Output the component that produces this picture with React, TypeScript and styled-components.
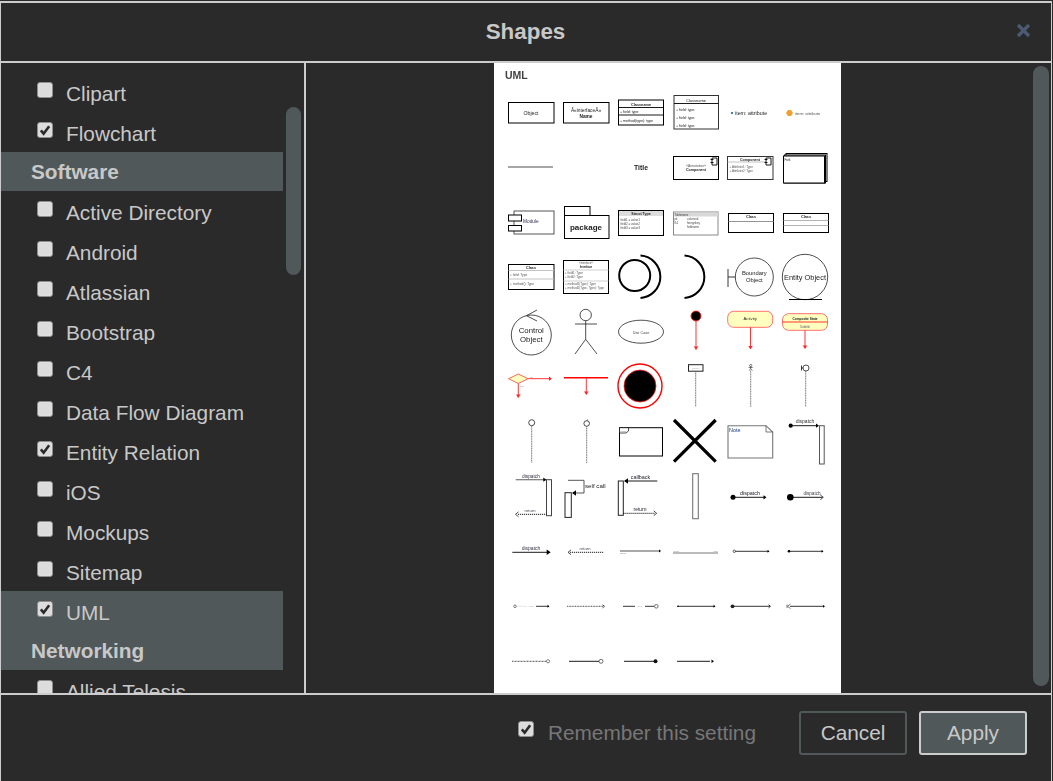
import React from 'react';
import styled, { createGlobalStyle } from 'styled-components';

const GlobalStyle = createGlobalStyle`
  html, body {
    margin: 0;
    padding: 0;
    background: #2a2a2a;
    overflow: hidden;
  }
`;

const Dialog = styled.div`
  box-sizing: border-box;
  width: 1052px;
  height: 780px;
  margin-top: 1px;
  background: #2a2a2a;
  border: 1px solid #cccccc;
  border-top-width: 2px;
  border-bottom: none;
  font-family: 'Liberation Sans', Arial, sans-serif;
  display: flex;
  flex-direction: column;
`;

const Header = styled.div`
  position: relative;
  height: 58px;
  flex: none;
  display: flex;
  align-items: center;
  justify-content: center;
  border-bottom: 2px solid #cccccc;
`;

const Title = styled.div`
  font-size: 22.4px;
  font-weight: 700;
  color: #c8c8c8;
  margin-left: -1px;
`;

const CloseButton = styled.div`
  position: absolute;
  right: 20px;
  top: 20px;
  width: 15px;
  height: 15px;
  color: #4c5a73;
  display: flex;
`;

const Body = styled.div`
  flex: none;
  height: 630px;
  display: flex;
  border-bottom: 2px solid #cccccc;
`;

const Sidebar = styled.div`
  flex: none;
  width: 303px;
  display: flex;
  overflow: hidden;
  border-right: 2px solid #cccccc;
`;

const List = styled.div`
  flex: none;
  width: 282px;
  padding-top: 9px;
`;

const Row = styled.div<{ $active?: boolean }>`
  height: 40px;
  display: flex;
  align-items: center;
  padding-left: 36px;
  background: ${(props) => (props.$active ? '#505859' : 'transparent')};
  color: #c8c8c8;
  font-size: 20.8px;
`;

const RowLabel = styled.span`
  margin-left: 13px;
  position: relative;
  top: 2px;
  white-space: nowrap;
`;

const GroupTitle = styled.div`
  height: 39px;
  line-height: 39px;
  padding-left: 30px;
  background: #505859;
  color: #c8c8c8;
  font-size: 20.8px;
  font-weight: 700;
`;

const CheckBox = styled.span`
  box-sizing: border-box;
  flex: none;
  width: 16px;
  height: 16px;
  margin-top: -4px;
  border: 1px solid #8e8e8e;
  border-radius: 3px;
  background: #dcdcdc;
  box-shadow: inset 0 0 1px #ffffff;
  display: flex;
  align-items: center;
  justify-content: center;
`;

const ListThumb = styled.div`
  flex: none;
  width: 15px;
  height: 168px;
  margin: 44px 0 0 3px;
  border-radius: 8px;
  background: #505859;
`;

const PreviewPane = styled.div`
  flex: 1;
  display: flex;
  padding-left: 188px;
  min-width: 0;
`;

const PreviewImage = styled.svg`
  flex: none;
  width: 347px;
  height: 630px;
  background: #ffffff;
  filter: blur(0.4px);
`;

const PreviewThumb = styled.div`
  flex: none;
  width: 16px;
  height: 620px;
  margin: 3px 0 0 192px;
  border-radius: 8px;
  background: #505859;
`;

const Footer = styled.div`
  flex: 1;
  display: flex;
  align-items: flex-start;
  justify-content: flex-end;
  padding: 16px 24px 0 0;
`;

const Remember = styled.div`
  display: flex;
  align-items: center;
  height: 44px;
  margin-right: 31px;
  color: #777777;
  font-size: 20.8px;
`;

const RememberBox = styled(CheckBox)`
  margin-top: -8px;
`;

const RememberLabel = styled(RowLabel)`
  top: 0;
  margin-left: 14px;
`;

const Button = styled.div<{ $primary?: boolean }>`
  box-sizing: border-box;
  width: 108px;
  height: 44px;
  margin-left: 12px;
  display: flex;
  align-items: center;
  justify-content: center;
  border-radius: 3px;
  border: 2px solid ${(props) => (props.$primary ? '#cccccc' : '#505859')};
  background: ${(props) => (props.$primary ? '#505859' : 'transparent')};
  color: #c8c8c8;
  font-size: 20.8px;
`;

const Check = () => (
  <svg width="12" height="12" viewBox="0 0 13 13">
    <path d="M2 7 L5 10.5 L11 2.5" fill="none" stroke="#2a2a2a" strokeWidth="2.8" />
  </svg>
);

const Item = ({ label, checked, active }: { label: string; checked?: boolean; active?: boolean }) => (
  <Row $active={active}>
    <CheckBox>{checked && <Check />}</CheckBox>
    <RowLabel>{label}</RowLabel>
  </Row>
);

const FONT = 'Liberation Sans, Arial, sans-serif';

const T = ({ x, y, s, b, a, c, children }: { x: number; y: number; s: number; b?: boolean; a?: 'start' | 'middle' | 'end'; c?: string; children: React.ReactNode }) => (
  <text x={x} y={y} fontSize={s} fontFamily={FONT} fontWeight={b ? 700 : 400} textAnchor={a || 'middle'} fill={c || '#222'}>
    {children}
  </text>
);

const Box = ({ x, y, w, h, c, sw, f }: { x: number; y: number; w: number; h: number; c?: string; sw?: number; f?: string }) => (
  <rect x={x} y={y} width={w} height={h} fill={f || '#fff'} stroke={c || '#000'} strokeWidth={sw || 1} />
);

const L = ({ x1, y1, x2, y2, c, sw, d }: { x1: number; y1: number; x2: number; y2: number; c?: string; sw?: number; d?: string }) => (
  <line x1={x1} y1={y1} x2={x2} y2={y2} stroke={c || '#000'} strokeWidth={sw || 0.9} strokeDasharray={d} />
);

const Head = ({ x, y, dir, open, c, s = 3 }: { x: number; y: number; dir: 1 | -1; open?: boolean; c?: string; s?: number }) =>
  open ? (
    <path d={`M${x - dir * s} ${y - s * 0.8} L${x} ${y} L${x - dir * s} ${y + s * 0.8}`} fill="none" stroke={c || '#000'} strokeWidth="0.7" />
  ) : (
    <path d={`M${x - dir * s} ${y - s * 0.7} L${x} ${y} L${x - dir * s} ${y + s * 0.7} Z`} fill={c || '#000'} />
  );

const Down = ({ x, y1, y2 }: { x: number; y1: number; y2: number }) => (
  <>
    <L x1={x} y1={y1} x2={x} y2={y2} c="#ff2020" sw={0.9} />
    <path d={`M${x - 2} ${y2 - 3} L${x} ${y2} L${x + 2} ${y2 - 3}`} fill="#ff2020" stroke="#ff2020" strokeWidth="0.4" />
  </>
);

const Lifeline = ({ x, y1, y2 }: { x: number; y1: number; y2: number }) => (
  <L x1={x} y1={y1} x2={x} y2={y2} c="#555" sw={0.8} d="1.2 0.5" />
);

const UmlSheet = () => (
  <PreviewImage viewBox="0 0 347 630">
    <T x={11} y={16} s={10.5} b a="start" c="#444">UML</T>

    {/* row 1 */}
    <Box x={14.5} y={39.5} w={45.5} h={20.5} />
    <T x={37} y={51.5} s={5.2}>Object</T>
    <Box x={69.5} y={39.5} w={45.5} h={20.5} />
    <T x={92} y={48.5} s={4.8}>Â«interfaceÂ»</T>
    <T x={92} y={55} s={4.8} b>Name</T>
    <Box x={124.5} y={37} w={45} h={25} />
    <L x1={124.5} y1={44.5} x2={169.5} y2={44.5} />
    <L x1={124.5} y1={52} x2={169.5} y2={52} />
    <T x={147} y={42.5} s={3.8} b>Classname</T>
    <T x={126} y={50} s={3.6} a="start">+ field: type</T>
    <T x={126} y={59} s={3.6} a="start">+ method(type): type</T>
    <Box x={180} y={32.5} w={44.5} h={33.5} c="#333" />
    <L x1={180} y1={40.5} x2={224.5} y2={40.5} />
    <T x={202} y={38.5} s={4}>Classname</T>
    <T x={182} y={47.5} s={3.6} a="start">+ field: type</T>
    <T x={182} y={55.5} s={3.6} a="start">+ field: type</T>
    <T x={182} y={64} s={3.6} a="start">+ field: type</T>
    <circle cx={238} cy={50} r={1.1} fill="#1560a0" />
    <T x={241} y={51.5} s={5.3} a="start">item: attribute</T>
    <path d="M292 50 L294 47 L297 47 L299 50 L297 53 L294 53 Z" fill="#f0a030" />
    <T x={301} y={51.5} s={4.2} a="start" c="#555">item: attribute</T>

    {/* row 2 */}
    <L x1={14} y1={104} x2={59} y2={104} c="#888" sw={1.4} />
    <T x={147} y={107} s={6.8} b>Title</T>
    <Box x={179.5} y={93.5} w={45} h={23} />
    <T x={202} y={103.5} s={3.4} c="#555">«Annotation»</T>
    <T x={202} y={107.5} s={3.6} b>Component</T>
    <path d="M218 95 h5 v7 h-5 z M216.5 96.5 h3 M216.5 99.5 h3" fill="#fff" stroke="#000" strokeWidth="0.9" />
    <Box x={233.5} y={93.5} w={45.5} h={23} c="#333" />
    <L x1={233.5} y1={99} x2={279} y2={99} c="#bbb" />
    <T x={256} y={98} s={3.6} b>Component</T>
    <T x={235.5} y={105} s={3} a="start" c="#555">+ Attribute1: Type</T>
    <T x={235.5} y={108.5} s={3} a="start" c="#555">+ Attribute2: Type</T>
    <path d="M272 95 h5 v7 h-5 z M270.5 96.5 h3 M270.5 99.5 h3" fill="#fff" stroke="#000" strokeWidth="0.9" />
    <Box x={292} y={90.5} w={41} h={28} />
    <Box x={290.5} y={92} w={41} h={28} />
    <Box x={289.5} y={93} w={41} h={27} />
    <T x={290.5} y={98} s={3} a="start">Fork</T>

    {/* row 3 */}
    <Box x={20} y={148} w={40} h={23} c="#555" />
    <Box x={14.5} y={152} w={13} h={6} />
    <Box x={14.5} y={162.5} w={13} h={5.5} />
    <T x={29} y={160} s={4.8} a="start" c="#335">Module</T>
    <Box x={70.5} y={143.5} w={25.5} h={9} />
    <Box x={70.5} y={152.5} w={44.5} h={23} />
    <T x={92} y={166.5} s={8} b>package</T>
    <Box x={124.5} y={147.5} w={45} h={25} />
    <rect x={125} y={148} width={44} height={5} fill="#ddd" />
    <T x={147} y={152} s={3.6} b>Struct Type</T>
    <T x={126.5} y={158} s={3} a="start" c="#444">field1 = value1</T>
    <T x={126.5} y={162} s={3} a="start" c="#444">field2 = value2</T>
    <T x={126.5} y={166} s={3} a="start" c="#444">field3 = value3</T>
    <Box x={179.5} y={149} w={44.5} h={23} c="#888" />
    <rect x={180} y={149.5} width={44} height={4} fill="#d8d8d8" />
    <T x={180.5} y={152.5} s={2.8} a="start" c="#444">Tablename</T>
    <T x={180.5} y={157} s={2.8} a="start" c="#444">pk</T>
    <T x={180.5} y={161} s={2.8} a="start" c="#444">fk1</T>
    <T x={193} y={157} s={2.8} a="start" c="#444">columnid</T>
    <T x={193} y={161} s={2.8} a="start" c="#444">foreignkey</T>
    <T x={193} y={165} s={2.8} a="start" c="#444">fieldname</T>
    <Box x={234.5} y={150.5} w={45} h={19} />
    <L x1={234.5} y1={158.5} x2={279.5} y2={158.5} c="#888" />
    <T x={257} y={155} s={3.8} b>Class</T>
    <Box x={289.5} y={150.5} w={45} h={19} />
    <L x1={289.5} y1={157.5} x2={334.5} y2={157.5} c="#aaa" />
    <L x1={289.5} y1={162.5} x2={334.5} y2={162.5} c="#aaa" />
    <T x={312} y={155} s={3.8} b>Class</T>

    {/* row 4 */}
    <Box x={14.5} y={201.5} w={45.5} h={25} />
    <L x1={14.5} y1={207.5} x2={60} y2={207.5} c="#bbb" />
    <L x1={14.5} y1={216} x2={60} y2={216} c="#bbb" />
    <T x={37} y={206} s={3.8} b>Class</T>
    <T x={16} y={213} s={3.2} a="start" c="#555">+ field: Type</T>
    <T x={16} y={222} s={3.2} a="start" c="#555">+ method(): Type</T>
    <Box x={69.5} y={197.5} w={45} h={33} />
    <T x={92} y={201} s={2.8} c="#555">«interface»</T>
    <T x={92} y={205} s={3} b>Interface</T>
    <L x1={69.5} y1={207} x2={114.5} y2={207} c="#ccc" />
    <T x={71} y={211} s={3} a="start" c="#555">+ field1: Type</T>
    <T x={71} y={215} s={3} a="start" c="#555">+ field2: Type</T>
    <L x1={69.5} y1={218} x2={114.5} y2={218} c="#ccc" />
    <T x={71} y={222} s={3} a="start" c="#555">+ method1(Type): Type</T>
    <T x={71} y={226} s={3} a="start" c="#555">+ method2(Type, Type): Type</T>
    <circle cx={140.7} cy={212.5} r={15.5} fill="none" stroke="#000" strokeWidth={2} />
    <path d="M146.5 192.5 A 21.3 21.3 0 0 1 146.5 235" fill="none" stroke="#000" strokeWidth={2} />
    <path d="M190.5 192.5 A 21.3 21.3 0 0 1 190.5 235" fill="none" stroke="#000" strokeWidth={2} />
    <circle cx={260.3} cy={214} r={19} fill="none" stroke="#222" strokeWidth={0.8} />
    <L x1={234} y1={206} x2={234} y2={224} c="#222" />
    <L x1={234} y1={214} x2={241.3} y2={214} c="#222" />
    <T x={260.3} y={212} s={5.8}>Boundary</T>
    <T x={260.3} y={219} s={5.8}>Object</T>
    <circle cx={311} cy={214} r={22.7} fill="none" stroke="#222" strokeWidth={0.8} />
    <L x1={295} y1={236.5} x2={328} y2={236.5} sw={1} />
    <T x={311} y={217} s={7.4}>Entity Object</T>

    {/* row 5 */}
    <circle cx={37.3} cy={272} r={20} fill="none" stroke="#222" strokeWidth={0.8} />
    <path d="M43 247 L32.5 252.7 L43 258" fill="none" stroke="#222" strokeWidth={0.8} />
    <T x={37.3} y={270} s={7.8}>Control</T>
    <T x={37.3} y={278.5} s={7.8}>Object</T>
    <circle cx={91.7} cy={252} r={5.7} fill="none" stroke="#222" strokeWidth={0.8} />
    <path d="M91.7 257.7 V276.3 M81 261 H103 M81 291 L91.7 276.3 L103 291" fill="none" stroke="#222" strokeWidth={0.8} />
    <ellipse cx={147} cy={268.7} rx={22.5} ry={11.5} fill="none" stroke="#222" strokeWidth={0.8} />
    <T x={147} y={270.5} s={3.8} c="#444">Use Case</T>
    <circle cx={202} cy={253} r={5} fill="#000" stroke="#ff2020" strokeWidth={0.9} />
    <Down x={202} y1={258} y2={286.5} />
    <rect x={233.7} y={248.3} width={45} height={16} rx={6} fill="#ffffc0" stroke="#ff6060" strokeWidth={0.9} />
    <T x={256.2} y={256.5} s={4.2}>Activity</T>
    <Down x={256.5} y1={264.3} y2={286} />
    <rect x={288.5} y={250.7} width={45} height={16.6} rx={6} fill="#ffffc0" stroke="#ff6060" strokeWidth={0.9} />
    <L x1={288.5} y1={259} x2={333.5} y2={259} c="#ff2020" />
    <T x={311} y={256.5} s={3.2} b>Composite State</T>
    <T x={311} y={264.5} s={3} c="#555">Subtitle</T>
    <Down x={311} y1={267.3} y2={285.5} />

    {/* row 6 */}
    <path d="M14.5 315.7 L24.3 311 L34 315.7 L24.3 320.5 Z" fill="#ffffc0" stroke="#ff4040" strokeWidth={0.8} />
    <L x1={34} y1={315.7} x2={56} y2={315.7} c="#ff2020" />
    <Head x={58} y={315.7} dir={1} c="#ff2020" />
    <T x={36} y={314.5} s={2.4} a="start" c="#777">no</T>
    <T x={26} y={324} s={2.4} a="start" c="#777">yes</T>
    <Down x={24.3} y1={320.5} y2={334.5} />
    <L x1={70} y1={314.7} x2={114} y2={314.7} c="#ff0000" sw={1.5} />
    <Down x={92.3} y1={315} y2={331.5} />
    <circle cx={146} cy={323} r={22} fill="#fff" stroke="#ff0000" strokeWidth={1.4} />
    <circle cx={146} cy={323} r={16} fill="#000" stroke="#ff2020" strokeWidth={0.8} />
    <Box x={194.5} y={301.7} w={14.5} h={6.5} c="#222" />
    <T x={201.7} y={306} s={2.4} c="#aaa">Lifeline</T>
    <Lifeline x={201.7} y1={308.2} y2={344} />
    <circle cx={256.7} cy={302.5} r={1.1} fill="none" stroke="#222" strokeWidth={0.6} />
    <path d="M256.7 303.5 V306 M254.7 304.5 H258.7 M255 307.5 L256.7 306 L258.5 307.5" fill="none" stroke="#222" strokeWidth={0.6} />
    <Lifeline x={256.7} y1={307.5} y2={344} />
    <circle cx={312} cy={305} r={3} fill="none" stroke="#222" strokeWidth={0.8} />
    <L x1={307.5} y1={302.5} x2={307.5} y2={307.5} c="#222" />
    <L x1={307.5} y1={305} x2={309} y2={305} c="#222" />
    <Lifeline x={311.7} y1={308} y2={344} />

    {/* row 7 */}
    <circle cx={37.7} cy={359.7} r={3} fill="none" stroke="#222" strokeWidth={0.8} />
    <Lifeline x={37.7} y1={362.7} y2={400} />
    <circle cx={92.7} cy={360.5} r={2.8} fill="none" stroke="#222" strokeWidth={0.8} />
    <path d="M92.7 357.7 L94 356.5" stroke="#222" strokeWidth={0.6} />
    <Lifeline x={92.7} y1={363.3} y2={400} />
    <Box x={125.5} y={364.7} w={43} h={28.3} />
    <path d="M125.5 364.7 H134.5 V368 L132 370 H125.5 Z" fill="#fff" stroke="#000" strokeWidth={0.7} />
    <T x={126.5} y={368.5} s={2.4} a="start" c="#777">frame</T>
    <L x1={180} y1={357} x2={221.7} y2={398.7} sw={3.2} />
    <L x1={221.7} y1={357} x2={180} y2={398.7} sw={3.2} />
    <path d="M234 362.7 H272 L278.7 369 V395 H234 Z" fill="#fff" stroke="#777" strokeWidth={1.1} />
    <path d="M272 362.7 V369 H278.7" fill="none" stroke="#444" strokeWidth={0.7} />
    <T x={235} y={368.5} s={5.4} a="start" c="#1a3a7a">Note</T>
    <circle cx={296.7} cy={362.7} r={2.1} fill="#000" />
    <L x1={296.7} y1={362.7} x2={324} y2={362.7} />
    <Head x={325} y={362.7} dir={1} />
    <Box x={325.5} y={362.7} w={4.7} h={38.3} c="#555" />
    <T x={311} y={360} s={5} c="#333">dispatch</T>

    {/* row 8 */}
    <L x1={21.7} y1={416.7} x2={52} y2={416.7} c="#777" sw={1.2} />
    <Head x={52.3} y={416.7} dir={1} />
    <Box x={52.5} y={416.7} w={5} h={36} c="#444" />
    <T x={37} y={415} s={4.8} c="#334">dispatch</T>
    <L x1={24} y1={451.3} x2={52.3} y2={451.3} d="1.2 0.8" />
    <Head x={21.5} y={451.3} dir={-1} open />
    <T x={36} y={449} s={4.2} c="#445">return</T>
    <Box x={71} y={429.7} w={6.3} h={24.7} c="#222" />
    <path d="M74 417.3 H90 V430 H79" fill="none" stroke="#555" strokeWidth={1} />
    <Head x={78} y={430} dir={-1} s={4} />
    <T x={91} y={425} s={6.2} a="start">self call</T>
    <Box x={124.3} y={418} w={5} h={34.3} c="#222" />
    <L x1={131} y1={418} x2={163.3} y2={418} />
    <Head x={130} y={418} dir={-1} s={4} />
    <T x={146.5} y={416} s={5.4} c="#223">callback</T>
    <L x1={129.3} y1={450.3} x2={161} y2={450.3} d="1.2 0.8" />
    <Head x={162.7} y={450.3} dir={1} open />
    <T x={146} y={448} s={5} c="#223">return</T>
    <Box x={198.7} y={410.7} w={5.6} h={45} c="#777" sw={1.1} />
    <circle cx={239} cy={434.3} r={2.5} fill="#000" />
    <L x1={239} y1={434.3} x2={270} y2={434.3} />
    <Head x={272.5} y={434.3} dir={1} />
    <T x={256} y={432} s={5.4} c="#223">dispatch</T>
    <circle cx={296.3} cy={434.3} r={3.3} fill="#000" />
    <L x1={296.3} y1={434.3} x2={328.5} y2={434.3} />
    <Head x={329.3} y={434.3} dir={1} open />
    <T x={318} y={432} s={4.6} c="#445">dispatch</T>

    {/* row 9 */}
    <L x1={18.3} y1={489.3} x2={53} y2={489.3} sw={0.9} />
    <Head x={56.7} y={489.3} dir={1} s={4} />
    <T x={37} y={487} s={5} c="#334">dispatch</T>
    <L x1={76} y1={489.3} x2={110} y2={489.3} d="1.2 0.8" sw={0.9} />
    <Head x={74} y={489.3} dir={-1} open />
    <T x={91} y={487} s={4.2} c="#445">return</T>
    <L x1={126} y1={488} x2={166} y2={488} c="#555" sw={1} />
    <Head x={167} y={488} dir={1} s={2} />
    <T x={126} y={491} s={2} a="start" c="#888">source</T>
    <L x1={179} y1={490} x2={224} y2={490} c="#666" sw={0.9} />
    <T x={179.5} y={489} s={2} a="start" c="#888">parent</T>
    <T x={223.5} y={489} s={2} a="end" c="#888">child</T>
    <circle cx={240.3} cy={488.3} r={1.2} fill="#fff" stroke="#000" strokeWidth={0.6} />
    <L x1={241.5} y1={488.3} x2={275} y2={488.3} sw={0.8} />
    <Head x={275.5} y={488.3} dir={1} s={2} />
    <circle cx={295} cy={488.3} r={1.3} fill="#000" />
    <L x1={295} y1={488.3} x2={329} y2={488.3} sw={0.8} />
    <Head x={329.5} y={488.3} dir={1} s={2} />

    {/* row 10 */}
    <circle cx={21} cy={543.3} r={1.3} fill="#fff" stroke="#333" strokeWidth={0.6} />
    <L x1={22.3} y1={543.3} x2={33} y2={543.3} sw={0.3} c="#aaa" />
    <L x1={42} y1={543.3} x2={55} y2={543.3} sw={0.8} />
    <Head x={55.5} y={543.3} dir={1} s={2} />
    <T x={37.5} y={544} s={2.2} c="#aaa">name</T>
    <L x1={73} y1={543.3} x2={109} y2={543.3} sw={0.7} d="1 0.6" />
    <Head x={110.5} y={543.3} dir={1} open s={2} />
    <L x1={129} y1={543.3} x2={141} y2={543.3} sw={0.8} />
    <L x1={151} y1={543.3} x2={160} y2={543.3} sw={0.8} />
    <circle cx={162.3} cy={543.3} r={1.8} fill="#fff" stroke="#333" strokeWidth={0.7} />
    <T x={146} y={544} s={2.2} c="#aaa">name</T>
    <L x1={183} y1={543.3} x2={221} y2={543.3} sw={0.8} />
    <Head x={221.5} y={543.3} dir={1} s={2} />
    <Head x={183} y={543.3} dir={-1} s={1.5} />
    <circle cx={238.5} cy={543.3} r={1.9} fill="#222" />
    <L x1={240} y1={543.3} x2={276} y2={543.3} sw={0.8} />
    <Head x={276.5} y={543.3} dir={1} open s={2} />
    <path d="M293 541.5 V545 M296.5 541 L293.5 543.3 L296.5 545.5" fill="none" stroke="#222" strokeWidth={0.6} />
    <L x1={296} y1={543.3} x2={330} y2={543.3} sw={0.8} />
    <Head x={331} y={543.3} dir={1} s={2} />

    {/* row 11 */}
    <L x1={18} y1={598.3} x2={52} y2={598.3} sw={0.7} d="1 0.5" />
    <circle cx={54} cy={598.3} r={1.6} fill="#fff" stroke="#333" strokeWidth={0.6} />
    <L x1={75} y1={598.3} x2={105} y2={598.3} sw={0.9} />
    <circle cx={107} cy={598.3} r={2} fill="#fff" stroke="#333" strokeWidth={0.7} />
    <L x1={130} y1={598.3} x2={160} y2={598.3} sw={0.9} />
    <circle cx={161.5} cy={598.3} r={2} fill="#111" />
    <L x1={183} y1={598.3} x2={216} y2={598.3} sw={0.9} />
    <Head x={220} y={598.3} dir={1} s={2.5} />
  </PreviewImage>
);

const softwareItems = ['Active Directory', 'Android', 'Atlassian', 'Bootstrap', 'C4', 'Data Flow Diagram'];

const App: React.FC = () => (
  <Dialog>
    <GlobalStyle />
    <Header>
      <Title>Shapes</Title>
      <CloseButton>
        <svg width="15" height="15" viewBox="0 0 15 15">
          <path d="M2 2 L13 13 M13 2 L2 13" stroke="currentColor" strokeWidth="3.2" fill="none" />
        </svg>
      </CloseButton>
    </Header>
    <Body>
      <Sidebar>
        <List>
          <Item label="Clipart" />
          <Item label="Flowchart" checked />
          <GroupTitle>Software</GroupTitle>
          {softwareItems.map((name) => (
            <Item key={name} label={name} />
          ))}
          <Item label="Entity Relation" checked />
          <Item label="iOS" />
          <Item label="Mockups" />
          <Item label="Sitemap" />
          <Item label="UML" checked active />
          <GroupTitle>Networking</GroupTitle>
          <Item label="Allied Telesis" />
        </List>
        <ListThumb />
      </Sidebar>
      <PreviewPane>
        <UmlSheet />
        <PreviewThumb />
      </PreviewPane>
    </Body>
    <Footer>
      <Remember>
        <RememberBox>
          <Check />
        </RememberBox>
        <RememberLabel>Remember this setting</RememberLabel>
      </Remember>
      <Button>Cancel</Button>
      <Button $primary>Apply</Button>
    </Footer>
  </Dialog>
);

export default App;
